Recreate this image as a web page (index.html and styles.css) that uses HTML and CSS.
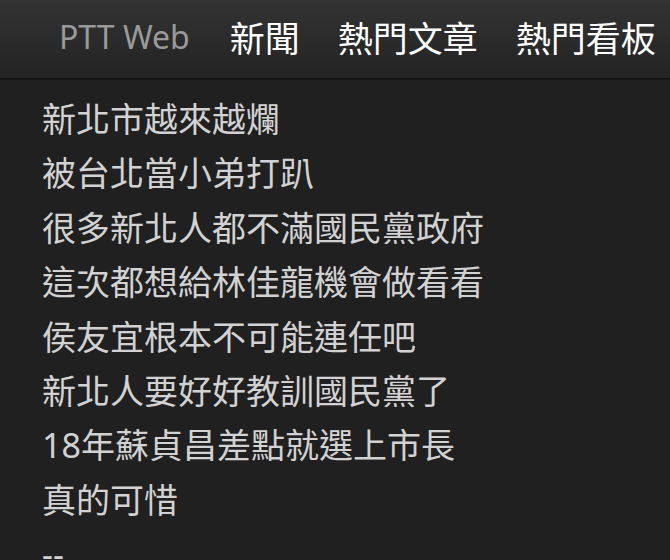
FILE: index.html
```html
<!DOCTYPE html>
<html lang="zh-Hant">
<head>
    <meta charset="UTF-8">
    <meta name="viewport" content="width=device-width, initial-scale=1.0">
    <title>PTT Web</title>
    <link rel="stylesheet" href="styles.css">
</head>
<body>
    <header class="topbar">
        <span class="brand">PTT Web</span>
        <nav class="nav">
            <a href="#">新聞</a>
            <a href="#">熱門文章</a>
            <a href="#">熱門看板</a>
        </nav>
    </header>

    <div class="content">
        <p>新北市越來越爛</p>
        <p>被台北當小弟打趴</p>
        <p>很多新北人都不滿國民黨政府</p>
        <p>這次都想給林佳龍機會做看看</p>
        <p>侯友宜根本不可能連任吧</p>
        <p>新北人要好好教訓國民黨了</p>
        <p>18年蘇貞昌差點就選上市長</p>
        <p>真的可惜</p>
        <p>--</p>
    </div>
</body>
</html>
```

FILE: styles.css
```css
body {
    margin: 0;
    background: #202020;
    font-family: 'Noto Sans', 'Noto Sans CJK TC', sans-serif;
    overflow: hidden;
}
.topbar {
    display: flex;
    align-items: center;
    height: 80px;
    padding: 0 0 6px 59px;
    background: linear-gradient(#333333, #232323);
    border-bottom: 2px solid #141414;
    box-sizing: border-box;
    white-space: nowrap;
}
.brand {
    font-size: 32px;
    color: #9a9a9a;
    margin-right: 40px;
}
.nav {
    display: flex;
    gap: 38px;
}
.nav a {
    color: #ffffff;
    text-decoration: none;
    font-size: 35px;
}
.content {
    padding: 12px 0 0 42px;
}
.content p {
    margin: 0;
    color: #d2d2d2;
    font-size: 34px;
    line-height: 54.4px;
    white-space: nowrap;
}
```
